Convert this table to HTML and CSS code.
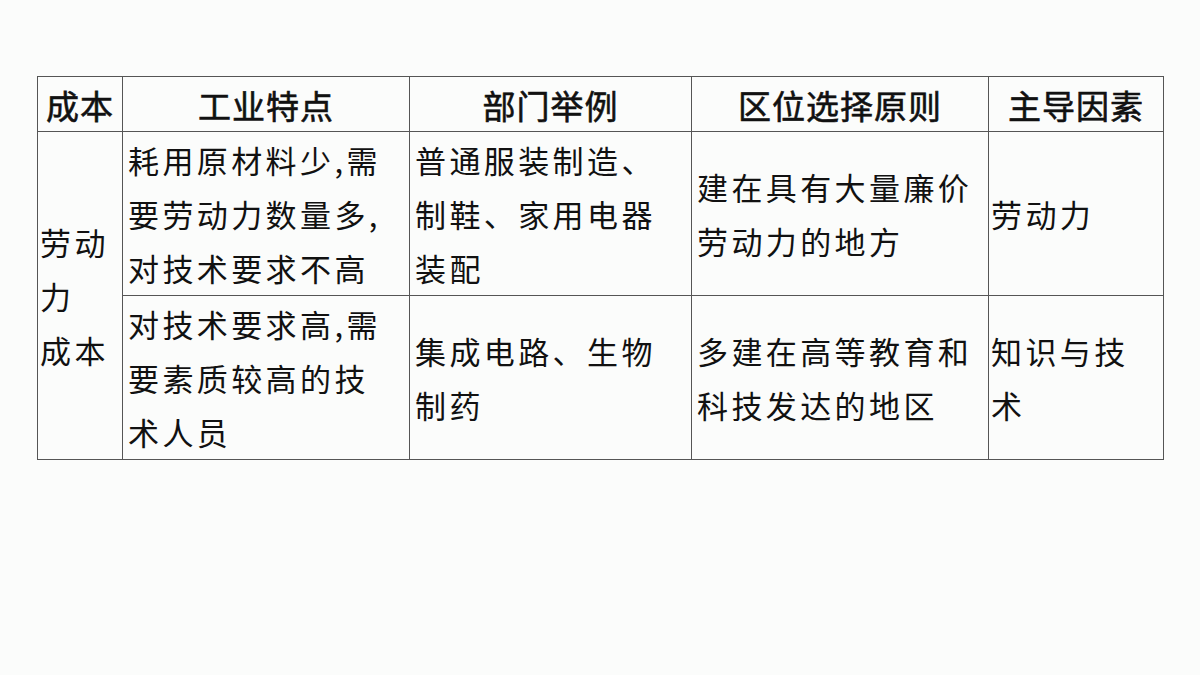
FILE: index.html
```html
<!DOCTYPE html>
<html lang="zh">
<head>
<meta charset="utf-8">
<link rel="stylesheet" href="styles.css">
</head>
<body>
<div class="page">
  <table class="grid">
    <colgroup>
      <col class="c1"><col class="c2"><col class="c3"><col class="c4"><col class="c5">
    </colgroup>
    <thead>
      <tr class="head">
        <th>成本</th>
        <th>工业特点</th>
        <th>部门举例</th>
        <th>区位选择原则</th>
        <th>主导因素</th>
      </tr>
    </thead>
    <tbody>
      <tr class="row">
        <td class="cost" rowspan="2">劳动<br>力<br>成本</td>
        <td>耗用原材料少,需<br>要劳动力数量多,<br>对技术要求不高</td>
        <td>普通服装制造、<br>制鞋、家用电器<br>装配</td>
        <td>建在具有大量廉价<br>劳动力的地方</td>
        <td class="last">劳动力</td>
      </tr>
      <tr class="row">
        <td>对技术要求高,需<br>要素质较高的技<br>术人员</td>
        <td>集成电路、生物<br>制药</td>
        <td>多建在高等教育和<br>科技发达的地区</td>
        <td class="last">知识与技<br>术</td>
      </tr>
    </tbody>
  </table>
</div>
</body>
</html>
```

FILE: styles.css
```css
html, body {
  margin: 0;
  padding: 0;
  background: #fbfcfb;
}
.page {
  width: 1200px;
  height: 675px;
  padding: 76px 0 0 37px;
  box-sizing: border-box;
}
.grid {
  border-collapse: collapse;
  table-layout: fixed;
  width: 1126px;
  font-family: "Noto Sans CJK SC", "Noto Sans", sans-serif;
  color: #111;
}
.c1 { width: 85px; }
.c2 { width: 287px; }
.c3 { width: 282px; }
.c4 { width: 297px; }
.c5 { width: 175px; }
.grid th, .grid td {
  border: 1px solid #555;
  padding: 0;
  white-space: nowrap;
  overflow: hidden;
}
.head {
  height: 55px;
}
.grid th {
  font-size: 33px;
  font-weight: 400;
  -webkit-text-stroke: 0.6px #111;
  letter-spacing: 1px;
  line-height: 40px;
  text-align: center;
  vertical-align: middle;
  padding-top: 2px;
}
.row {
  height: 164px;
}
.grid td {
  font-size: 31px;
  font-weight: 400;
  letter-spacing: 3.4px;
  line-height: 54px;
  text-align: left;
  vertical-align: middle;
  padding-left: 5px;
}
.grid td.cost {
  padding-left: 2px;
}
.grid td.last {
  padding-left: 2px;
}
```
